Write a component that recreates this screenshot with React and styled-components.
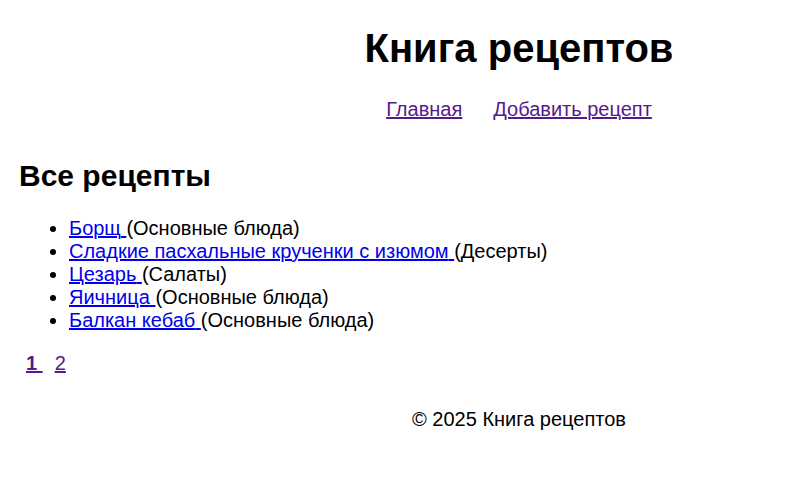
import React from 'react';
import styled, { createGlobalStyle } from 'styled-components';

const GlobalStyle = createGlobalStyle`
  body {
    margin: 0;
    background: #fff;
    color: #000;
    font-family: "Liberation Sans", Arial, sans-serif;
    font-size: 20px;
  }
`;

const recipes = [
  { title: 'Борщ', category: 'Основные блюда' },
  { title: 'Сладкие пасхальные крученки с изюмом', category: 'Десерты' },
  { title: 'Цезарь', category: 'Салаты' },
  { title: 'Яичница', category: 'Основные блюда' },
  { title: 'Балкан кебаб', category: 'Основные блюда' },
];

const App = () => {
  return (
    <>
      <GlobalStyle />
      <Header>
        <Title>Книга рецептов</Title>
        <Nav>
          <Link href="#" visited>Главная</Link>
          <Link href="#" visited>Добавить рецепт</Link>
        </Nav>
      </Header>
      <Main>
        <SectionTitle>Все рецепты</SectionTitle>
        <RecipeList>
          {recipes.map((r) => (
            <li key={r.title}>
              <Link href="#">{r.title} </Link>({r.category})
            </li>
          ))}
        </RecipeList>
        <Pagination>
          <Link href="#" visited bold>1 </Link>
          <Link href="#" visited>2</Link>
        </Pagination>
      </Main>
      <Footer>© 2025 Книга рецептов</Footer>
    </>
  );
};

export default App;

const Header = styled.header`
  padding-left: 236px;
  text-align: center;
`;

const Title = styled.h1`
  margin: 25px 0 0;
  font-size: 40px;
  line-height: 46px;
  font-weight: 700;
`;

const Nav = styled.nav`
  margin-top: 27px;
  display: flex;
  justify-content: center;
  gap: 31px;
  line-height: 23px;
`;

const Link = styled.a`
  color: ${(props) => (props.visited ? '#551a8b' : '#0000ee')};
  font-weight: ${(props) => (props.bold ? 700 : 400)};
  text-decoration: underline;
  white-space: pre;
`;

const Main = styled.main`
  padding-left: 19px;
`;

const SectionTitle = styled.h2`
  margin: 37px 0 0;
  font-size: 30px;
  line-height: 35px;
  font-weight: 700;
`;

const RecipeList = styled.ul`
  margin: 24px 0 0;
  padding-left: 50px;
  line-height: 23px;
`;

const Pagination = styled.div`
  margin-top: 20px;
  padding-left: 7px;
  display: flex;
  gap: 12px;
  line-height: 23px;
`;

const Footer = styled.footer`
  margin-top: 33px;
  padding-left: 236px;
  text-align: center;
  line-height: 23px;
`;
